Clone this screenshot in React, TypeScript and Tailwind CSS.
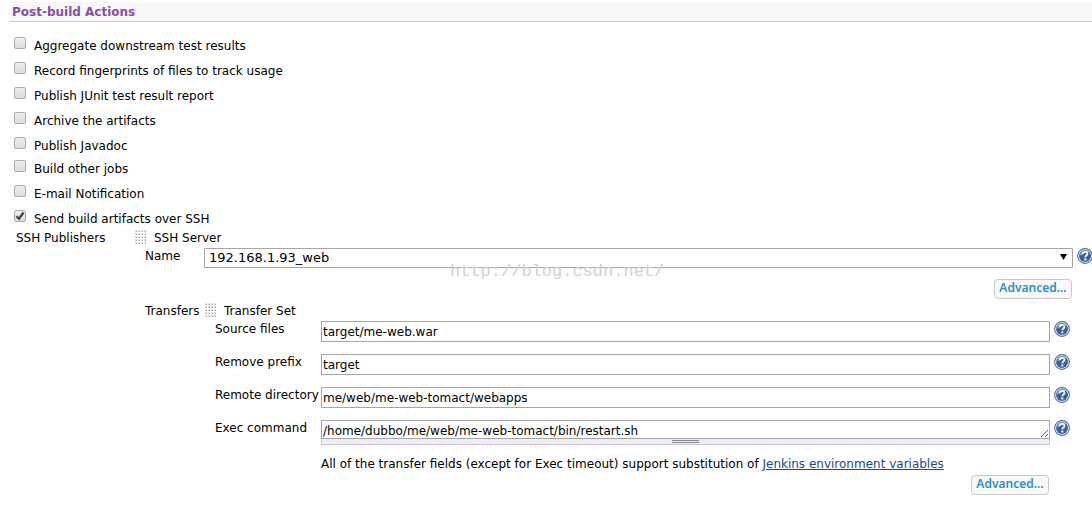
import { useState } from 'react';

const steps = [
    { name: 'Aggregate downstream test results', height: 'h-[25px]' },
    { name: 'Record fingerprints of files to track usage', height: 'h-[25px]' },
    { name: 'Publish JUnit test result report', height: 'h-[25px]' },
    { name: 'Archive the artifacts', height: 'h-[25px]' },
    { name: 'Publish Javadoc', height: 'h-[23px]' },
    { name: 'Build other jobs', height: 'h-[25px]' },
    { name: 'E-mail Notification', height: 'h-[25px]' },
    { name: 'Send build artifacts over SSH', height: 'h-6' },
];

const fields = [
    { id: 'source', label: 'Source files', value: 'target/me-web.war' },
    { id: 'prefix', label: 'Remove prefix', value: 'target' },
    { id: 'remote', label: 'Remote directory', value: 'me/web/me-web-tomact/webapps' },
];

const HelpButton = () => (
    <button type="button" aria-label="Help" className="shrink-0 w-4 h-4">
        <svg viewBox="0 0 16 16" className="w-4 h-4">
            <circle cx="8" cy="8" r="7.4" fill="#fff" stroke="#4a6fa8" strokeWidth="1.1" />
            <circle cx="8" cy="8" r="6" fill="#3860a0" />
            <path d="M2.3 8.5a5.7 5.7 0 0 1 9.5-4.7C9 4.500 5 6 2.300 8.500z" fill="#8aa9d4" opacity="0.7" />
            <path d="M5.6 6.300C5.700 4.700 6.700 3.900 8.100 3.900c1.400 0 2.400.7 2.400 1.900 0 1.700-2.200 1.700-2.200 3.500" fill="none" stroke="#fff" strokeWidth="1.8" />
            <rect x="7.300" y="10.400" width="2" height="2" fill="#fff" />
        </svg>
    </button>
);

const DragHandle = () => (
    <svg width="12" height="14" viewBox="0 0 12 14" className="shrink-0 cursor-move">
        {[0, 3, 6, 9].map((x) =>
            [0, 3, 6, 9, 12].map((y) => (
                <g key={`${x}-${y}`}>
                    <rect x={x} y={y} width="2" height="2" fill="#dcdcdc" />
                    <rect x={x + 1} y={y + 1} width="1" height="1" fill="#a4a4a4" />
                </g>
            ))
        )}
    </svg>
);

const AdvancedButton = () => (
    <button
        type="button"
        className="w-[78px] h-5 rounded border border-[#c8c8c8] bg-[#f9f9f9] pb-0.5 font-['Noto_Sans',sans-serif] text-[12px] leading-4 font-semibold text-[#2d8fc4]"
    >
        Advanced...
    </button>
);

export default function App() {
    const [checked, setChecked] = useState<string[]>(['Send build artifacts over SSH']);

    const toggle = (name: string) => {
        setChecked((prev) => (prev.includes(name) ? prev.filter((n) => n !== name) : [...prev, name]));
    };

    return (
        <div className="relative min-h-screen overflow-x-hidden bg-white pt-0.5 font-['DejaVu_Sans',sans-serif] text-[12px] leading-4 text-black">
            <h1 className="ml-2.5 h-5 border-b border-[#d3c1ea] bg-[#f8f8fb] pl-0.5 leading-5 font-bold text-[#85529f]">
                Post-build Actions
            </h1>

            <div className="mt-[11px] pl-3.5">
                {steps.map((step) => (
                    <label key={step.name} className={`flex items-start gap-2 pt-1 ${step.height}`}>
                        <span className="relative flex h-3 w-3 shrink-0">
                            <input
                                type="checkbox"
                                checked={checked.includes(step.name)}
                                onChange={() => toggle(step.name)}
                                className="h-3 w-3 appearance-none rounded-[2px] border border-[#adadad] bg-linear-to-b from-[#eee] to-[#dcdcdc]"
                            />
                            {checked.includes(step.name) && (
                                <svg viewBox="0 0 12 12" className="pointer-events-none absolute inset-0 h-3 w-3">
                                    <path d="M2.500 6.200L5 8.700L9.500 2.500" fill="none" stroke="#404040" strokeWidth="2.200" />
                                </svg>
                            )}
                        </span>
                        <span className="pt-px">{step.name}</span>
                    </label>
                ))}
            </div>

            <div className="flex h-[18px] items-start pl-4">
                <span className="w-[119px]">SSH Publishers</span>
                <DragHandle />
                <span className="pl-[7px]">SSH Server</span>
            </div>

            <div className="flex items-start pl-[145px]">
                <label htmlFor="server" className="w-[59px] shrink-0">Name</label>
                <div className="relative flex min-w-0 grow">
                    <select
                        id="server"
                        className="h-5 w-full appearance-none rounded-[1px] border border-[#a6a6a6] bg-white pl-1 text-[13px] leading-[18px]"
                    >
                        <option>192.168.1.93_web</option>
                    </select>
                    <svg viewBox="0 0 7 6" className="pointer-events-none absolute top-1.5 right-1.5 h-1.5 w-[7px]">
                        <path d="M0 0H7L3.500 6Z" fill="#000" />
                    </svg>
                </div>
                <div className="-mr-px pl-1">
                    <HelpButton />
                </div>
            </div>

            <div className="mt-[11px] flex justify-end pr-5">
                <AdvancedButton />
            </div>

            <div className="mt-1 flex h-[18px] items-start pl-[145px]">
                <span className="w-[60px]">Transfers</span>
                <DragHandle />
                <span className="pl-[7px]">Transfer Set</span>
            </div>

            <div className="pr-[22px] pl-[215px]">
                {fields.map((field) => (
                    <div key={field.id} className="flex h-[33px] items-start">
                        <label htmlFor={field.id} className="w-[106px] shrink-0">{field.label}</label>
                        <input
                            id={field.id}
                            type="text"
                            defaultValue={field.value}
                            className="h-[21px] min-w-0 grow border border-[#a6a6a6] pl-px"
                        />
                        <div className="pl-1">
                            <HelpButton />
                        </div>
                    </div>
                ))}
                <div className="flex items-start">
                    <label htmlFor="exec" className="w-[106px] shrink-0">Exec command</label>
                    <div className="min-w-0 grow">
                        <textarea
                            id="exec"
                            rows={1}
                            defaultValue="/home/dubbo/me/web/me-web-tomact/bin/restart.sh"
                            className="block h-[19px] w-full resize overflow-hidden border border-[#a6a6a6] pt-0.5 pl-px"
                        />
                        <div className="flex h-1.5 items-start justify-center border-x border-b border-[#d3c1ea] bg-[#eee] pt-px">
                            <span className="h-[3px] w-[27px] border-y border-[#888]" />
                        </div>
                    </div>
                    <div className="pl-1">
                        <HelpButton />
                    </div>
                </div>
                <p className="mt-[11px] pl-[106px]">
                    All of the transfer fields (except for Exec timeout) support substitution of{' '}
                    <a href="#env" className="text-[#204a87] underline">Jenkins environment variables</a>
                </p>
            </div>

            <div className="mt-[3px] flex justify-end pr-[43px]">
                <AdvancedButton />
            </div>

            <div className="pointer-events-none absolute top-[262px] left-[450px] font-['Liberation_Mono',monospace] text-[17px] leading-5 text-[#d2d2cc]">
                http://blog.csdn.net/
            </div>
        </div>
    );
}
